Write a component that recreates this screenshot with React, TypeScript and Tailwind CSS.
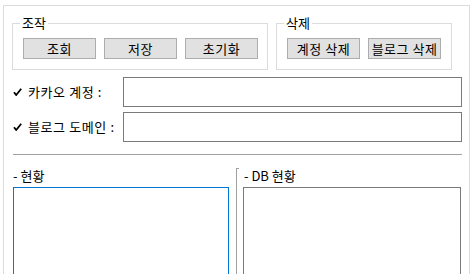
const FONT = { fontFamily: '"Noto Sans CJK KR", "Noto Sans", sans-serif' };

function Check() {
  return (
    <svg width="9" height="8" viewBox="0 0 9 8" className="shrink-0">
      <path d="M1 4.2 L3.2 7 L8.2 0.8" stroke="#000" strokeWidth="1.8" fill="none" />
    </svg>
  );
}

function Btn({ label }: { label: string }) {
  return (
    <button
      type="button"
      className="h-[21px] w-[73px] border border-[#adadad] bg-[#e1e1e1] text-[13px] leading-none tracking-[0.5px] text-black"
    >
      {label}
    </button>
  );
}

function Group({ title, width, buttons }: { title: string; width: string; buttons: string[] }) {
  return (
    <fieldset className={`${width} border border-[#dcdcdc] pl-[10px] pt-[7px] pb-[10px]`}>
      <legend className="ml-[-3px] px-[2px] text-[13px] leading-[16px] text-black">{title}</legend>
      <div className="flex gap-[8px]">
        {buttons.map(b => (
          <Btn key={b} label={b} />
        ))}
      </div>
    </fieldset>
  );
}

function Field({ label }: { label: string }) {
  return (
    <div className="flex items-center">
      <div className="flex w-[110px] items-center gap-[6px] text-[13px] text-black">
        <Check />
        <span className="whitespace-nowrap tracking-[0.6px]">{label}</span>
      </div>
      <div className="h-[30px] w-[339px] border border-[#7a7a7a] bg-white" />
    </div>
  );
}

export default function App() {
  return (
    <div className="h-[274px] w-[475px] overflow-hidden bg-white" style={FONT}>
      <div className="ml-[3px] mt-[5px] flex h-[300px] w-[467px] flex-col border-l border-r border-t border-[#dcdcdc]">
        <div className="flex gap-[8px] pl-[8px] pt-[9px]">
          <Group title="조작" width="w-[256px]" buttons={['조회', '저장', '초기화']} />
          <Group title="삭제" width="w-[176px]" buttons={['계정 삭제', '블로그 삭제']} />
        </div>

        <div className="mt-[7px] flex flex-col gap-[5px] pl-[9px]">
          <Field label="카카오 계정 :" />
          <Field label="블로그 도메인 :" />
        </div>

        <div className="ml-[9px] mt-[12px] h-px w-[449px] bg-[#a0a0a0]" />

        <div className="mt-[13px] flex pl-[9px]">
          <div className="w-[216px]">
            <div className="mb-[3px] h-[16px] text-[13px] leading-[16px] text-black">- 현황</div>
            <div className="h-[100px] border border-[#0078d7]" />
          </div>
          <div className="ml-[7px] h-[120px] w-[3px] border-l border-t border-[#a0a0a0]" />
          <div className="ml-[4px] w-[218px]">
            <div className="mb-[3px] h-[16px] pl-[1px] text-[13px] leading-[16px] text-black">- DB 현황</div>
            <div className="h-[100px] border border-[#7a7a7a]" />
          </div>
        </div>
      </div>
    </div>
  );
}
